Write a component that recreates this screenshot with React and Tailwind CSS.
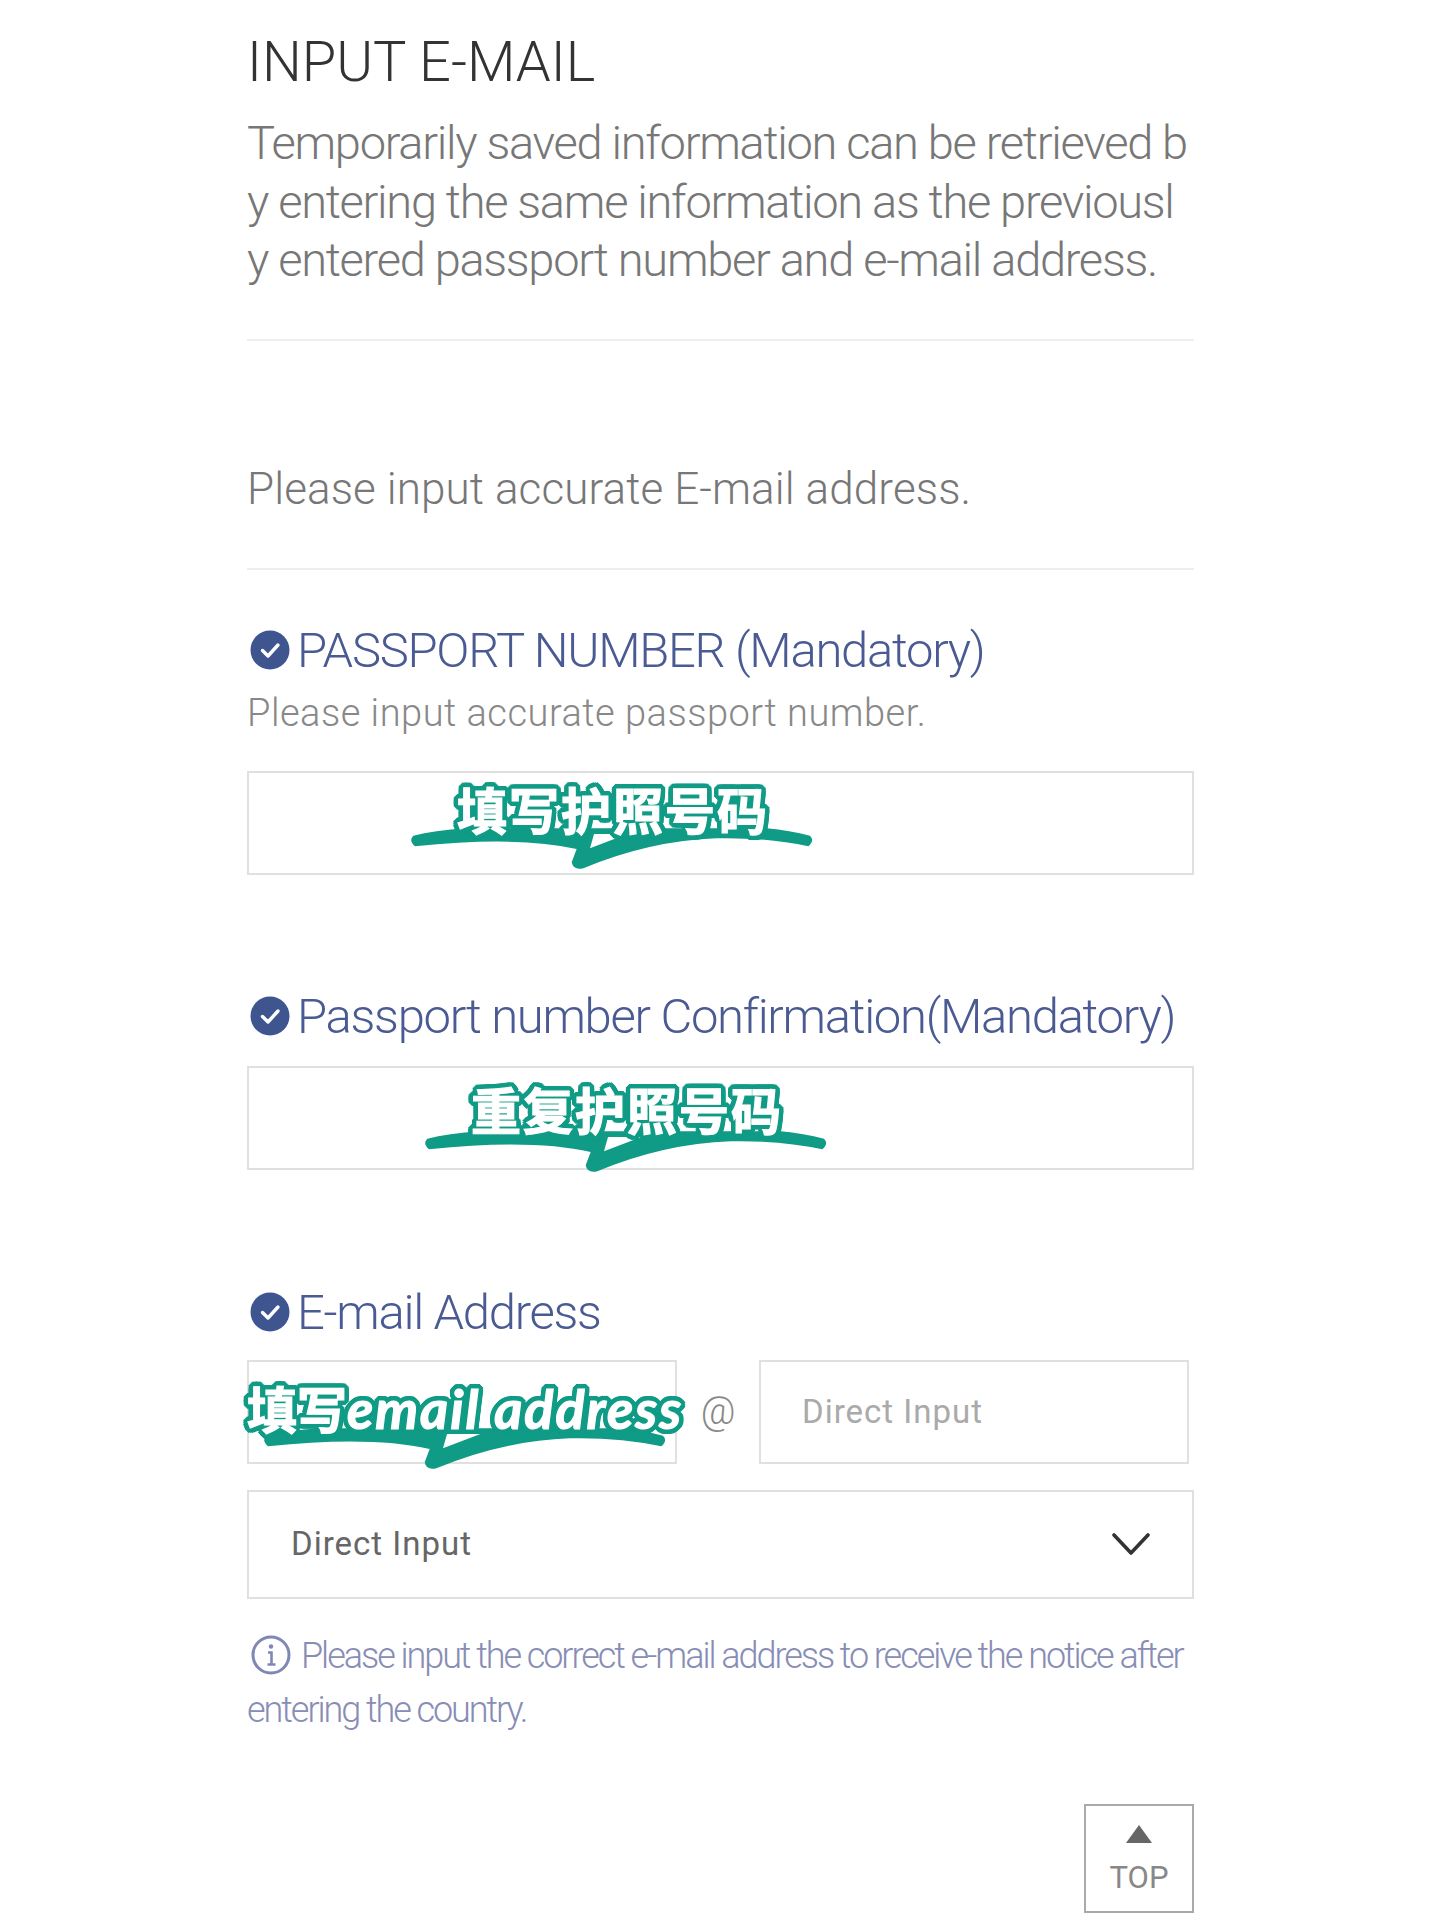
import React from 'react';

function CheckBadge() {
    return (
        <svg width="40" height="40" viewBox="0 0 40 40" className="shrink-0 ml-[3px] mr-[7px] -mt-[2px]">
            <circle cx="20" cy="20" r="19.5" fill="#3f5590" />
            <path d="M12.5 20.5l5.5 5.5 10-11" fill="none" stroke="#fff" strokeWidth="3.4" strokeLinecap="round" strokeLinejoin="round" />
        </svg>
    );
}

function Label({ children }) {
    return (
        <div className="flex items-center h-[50px] text-[49px] leading-[50px] tracking-[-1.3px] font-light text-[#4a5a92] whitespace-nowrap">
            <CheckBadge />
            {children}
        </div>
    );
}

// Green swoosh under the stickers, coordinates are 3x the real size
function Swoosh({ className }) {
    return (
        <svg viewBox="0 0 1320 330" className={className}>
            <path
                d="M40 200Q100 185 200 178L1100 178Q1170 185 1230 200Q1245 215 1225 232Q1100 205 950 208Q750 215 550 298Q520 305 515 280L530 240Q350 200 45 232Q25 215 40 200Z"
                fill="#0f9b85"
            />
            <path d="M570 238L582 195L682 195Z" fill="#fff" />
        </svg>
    );
}

function StickerText({ children, className }) {
    return (
        <span
            className={
                "absolute whitespace-nowrap text-white font-bold text-[50px] leading-[60px] [font-family:'Noto_Sans_CJK_SC',sans-serif] [-webkit-text-stroke:1.2px_#fff] [text-shadow:5px_0_0_#0f9b85,-5px_0_0_#0f9b85,0_5px_0_#0f9b85,0_-5px_0_#0f9b85,4px_3px_0_#0f9b85,-4px_3px_0_#0f9b85,4px_-3px_0_#0f9b85,-4px_-3px_0_#0f9b85,3px_4px_0_#0f9b85,-3px_4px_0_#0f9b85,3px_-4px_0_#0f9b85,-3px_-4px_0_#0f9b85,5px_2px_0_#0f9b85,-5px_2px_0_#0f9b85,5px_-2px_0_#0f9b85,-5px_-2px_0_#0f9b85,2px_5px_0_#0f9b85,-2px_5px_0_#0f9b85,2px_-5px_0_#0f9b85,-2px_-5px_0_#0f9b85] " +
                className
            }
        >
            {children}
        </span>
    );
}

export default function App() {
    return (
        <div className="min-h-[1920px] bg-white font-['Roboto',sans-serif]">
            <div className="ml-[247px] w-[947px] pt-[32px]">
                <h1 className="text-[56px] leading-[60px] font-light text-[#333]">INPUT E-MAIL</h1>
                <p className="mt-[22px] text-[47px] leading-[58.5px] tracking-[-1.3px] font-light text-[#777] whitespace-nowrap">
                    Temporarily saved information can be retrieved b
                    <br />
                    y entering the same information as the previousl
                    <br />
                    y entered passport number and e-mail address.
                </p>
                <div className="mt-[49px] h-[2px] bg-[#eeeeee]" />
                <p className="mt-[119px] text-[44px] leading-[58px] tracking-[0.1px] font-light text-[#777]">
                    Please input accurate E-mail address.
                </p>
                <div className="mt-[50px] h-[2px] bg-[#eeeeee]" />

                {/* Passport number */}
                <div className="mt-[56px]">
                    <Label>PASSPORT NUMBER (Mandatory)</Label>
                </div>
                <p className="mt-[17px] text-[38px] leading-[40px] tracking-[0.5px] font-light text-[#888]">
                    Please input accurate passport number.
                </p>
                <div className="relative mt-[38px] h-[104px] border-2 border-[#e0e0e0]">
                    <Swoosh className="absolute left-[151px] top-[-4px] w-[440px] h-[110px]" />
                    <StickerText className="left-[208px] top-[5px] tracking-[2px]">填写护照号码</StickerText>
                </div>

                {/* Confirmation */}
                <div className="mt-[117px]">
                    <Label>Passport number Confirmation(Mandatory)</Label>
                </div>
                <div className="relative mt-[24px] h-[104px] border-2 border-[#e0e0e0]">
                    <Swoosh className="absolute left-[165px] top-[4px] w-[440px] h-[110px]" />
                    <StickerText className="left-[222px] top-[10px] tracking-[2px]">重复护照号码</StickerText>
                </div>

                {/* E-mail */}
                <div className="mt-[118px]">
                    <Label>E-mail Address</Label>
                </div>
                <div className="flex items-center mt-[22px] h-[104px]">
                    <div className="relative w-[430px] h-full border-2 border-[#e0e0e0]">
                        <Swoosh className="absolute left-[4px] top-[7px] w-[440px] h-[110px]" />
                        <StickerText className="left-[-2px] top-[15px]">
                            填写<span className="italic text-[54px] font-['Lato',sans-serif] tracking-[2px]">email address</span>
                        </StickerText>
                    </div>
                    <span className="w-[82px] text-center text-[38px] font-light text-[#888]">@</span>
                    <div className="flex items-center w-[430px] h-full pl-[41px] border-2 border-[#e0e0e0] text-[33px] tracking-[1px] text-[#aaa]">
                        Direct Input
                    </div>
                </div>
                <div className="flex items-center justify-between mt-[26px] h-[109px] pl-[42px] pr-[42px] border-2 border-[#e0e0e0] text-[33px] tracking-[1px] text-[#666]">
                    <span>Direct Input</span>
                    <svg width="38" height="22" viewBox="0 0 38 22" fill="none" stroke="#333" strokeWidth="3.6" strokeLinecap="round" strokeLinejoin="round">
                        <path d="M2 2l17 18L36 2" />
                    </svg>
                </div>

                <p className="mt-[30px] text-[36px] leading-[54px] tracking-[-2.05px] font-light text-[#878db5] whitespace-nowrap">
                    <svg width="40" height="40" viewBox="0 0 40 40" fill="none" className="inline-block align-[-7px] ml-[4px] mr-[10px]">
                        <circle cx="20" cy="20" r="18" stroke="#7f88b4" strokeWidth="3" />
                        <circle cx="20" cy="11.5" r="2.2" fill="#7f88b4" />
                        <path d="M17 17.5h3.5V29M16.5 29.5h8" stroke="#7f88b4" strokeWidth="2.6" />
                    </svg>
                    Please input the correct e-mail address to receive the notice after
                    <br />
                    entering the country.
                </p>

                <div className="flex justify-end mt-[67px]">
                    <div className="flex flex-col items-center w-[110px] h-[109px] border-2 border-[#aaa] pt-[19px]">
                        <svg width="26" height="18" viewBox="0 0 26 18">
                            <path d="M13 0L26 18H0Z" fill="#666" />
                        </svg>
                        <span className="mt-[18px] text-[31px] leading-[34px] text-[#888]">TOP</span>
                    </div>
                </div>
            </div>
        </div>
    );
}
